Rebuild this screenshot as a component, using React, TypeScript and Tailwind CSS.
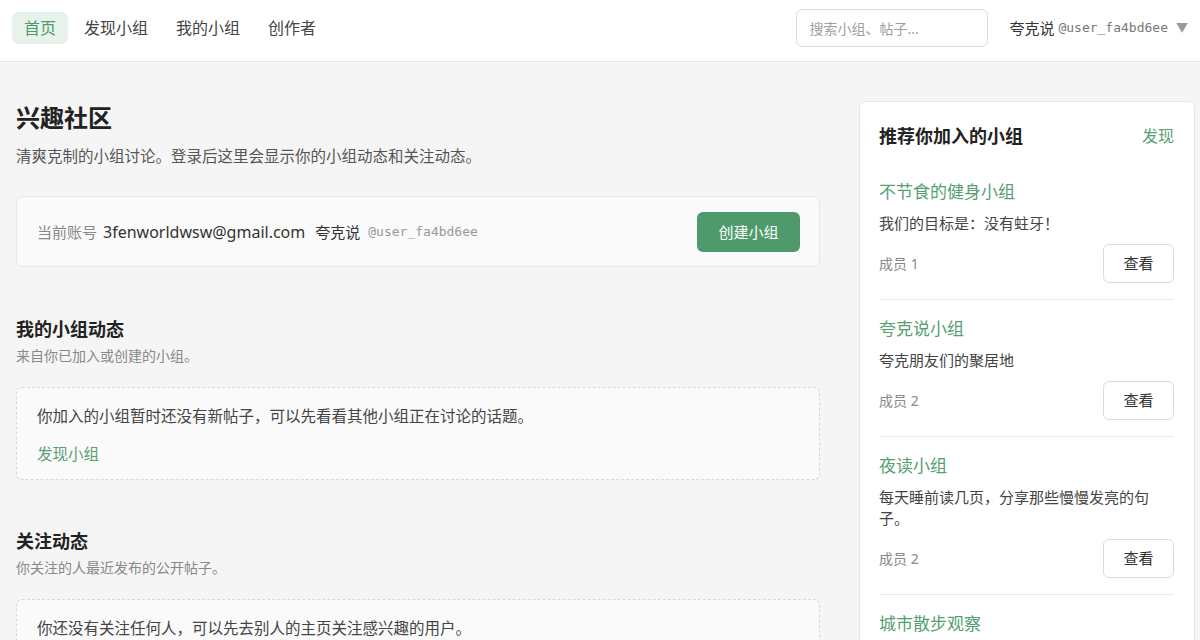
const groups = [
  { name: '不节食的健身小组', desc: '我们的目标是：没有蛀牙！', members: 1 },
  { name: '夸克说小组', desc: '夸克朋友们的聚居地', members: 2 },
  { name: '夜读小组', desc: '每天睡前读几页，分享那些慢慢发亮的句子。', members: 2 },
  { name: '城市散步观察', desc: '走路的时候，顺便看看这座城市。', members: 3 },
]

const navItems = ['首页', '发现小组', '我的小组', '创作者']

function Header() {
  return (
    <header className="flex items-center justify-between bg-white border-b border-[#e6e6e6] pl-3 pr-3 pt-[9px] pb-[14px]">
      <nav className="flex items-center gap-1">
        {navItems.map((item, i) => (
          <a
            key={item}
            className={
              i === 0
                ? 'px-3 h-8 flex items-center rounded-md bg-[#e7f2ea] text-[#4f9a6c] text-[16px]'
                : 'px-3 h-8 flex items-center rounded-md text-[#444] text-[16px]'
            }
          >
            {item}
          </a>
        ))}
      </nav>
      <div className="flex items-center gap-[21px]">
        <div className="w-[192px] h-[38px] border border-[#dcdcdc] rounded-md flex items-center pl-3 text-[14px] text-[#a0a0a0]">
          搜索小组、帖子...
        </div>
        <div className="flex items-center gap-1 text-[15px] text-[#333]">
          <span>夸克说</span>
          <span className="font-['DejaVu_Sans_Mono',monospace] text-[13px] text-[#777]">@user_fa4bd6ee</span>
          <span className="text-[12px] text-[#999] ml-1">▼</span>
        </div>
      </div>
    </header>
  )
}

function SectionHead({ title, sub }: { title: string; sub: string }) {
  return (
    <div>
      <h2 className="text-[18px] leading-[26px] font-bold text-[#222]">{title}</h2>
      <p className="mt-1 text-[14px] leading-5 text-[#888]">{sub}</p>
    </div>
  )
}

function EmptyBox({ text, link }: { text: string; link: string }) {
  return (
    <div className="mt-[21px] bg-[#fafafa] border border-dashed border-[#d8d8d8] rounded-md pl-5 pt-4 pb-[13px]">
      <p className="text-[15.5px] leading-6 text-[#444]">{text}</p>
      <a className="block mt-[14px] text-[15.5px] leading-6 text-[#5a9e74]">{link}</a>
    </div>
  )
}

function Sidebar() {
  return (
    <aside className="bg-white border border-[#e6e6e6] rounded-md pl-[19px] pr-5 pt-5 self-start">
      <div className="flex items-center justify-between mb-[13px]">
        <h3 className="text-[18px] leading-7 font-bold text-[#222]">推荐你加入的小组</h3>
        <a className="text-[16px] text-[#5a9e74]">发现</a>
      </div>
      {groups.map((g) => (
        <div key={g.name} className="pt-4 pb-[16px] border-b border-[#eaeaea]">
          <div className="text-[17px] leading-[26px] text-[#55a070]">{g.name}</div>
          <p className="mt-[8px] text-[15px] leading-[21px] text-[#444]">{g.desc}</p>
          <div className="mt-[10px] flex items-center justify-between">
            <span className="text-[14px] text-[#888]">成员 {g.members}</span>
            <button className="w-[71px] h-[39px] rounded-md border border-[#dcdcdc] bg-white text-[15px] text-[#333]">
              查看
            </button>
          </div>
        </div>
      ))}
    </aside>
  )
}

export default function App() {
  return (
    <div className="min-h-screen bg-[#f5f5f5] font-['Noto_Sans','Noto_Sans_CJK_SC',sans-serif] text-[#333]">
      <Header />
      <main className="grid grid-cols-[804px_336px] gap-[39px] pl-4 pt-[39px]">
        <div>
          {/* Intro */}
          <h1 className="text-[24px] leading-8 font-bold text-[#222] pt-[1px]">兴趣社区</h1>
          <p className="mt-[10px] text-[15.5px] leading-6 text-[#555]">
            清爽克制的小组讨论。登录后这里会显示你的小组动态和关注动态。
          </p>

          {/* Account */}
          <div className="mt-[28px] flex items-center justify-between bg-[#fafafa] border border-[#e8e8e8] rounded-md pl-5 pr-[19px] pt-[15px] pb-[14px]">
            <div className="flex items-center">
              <span className="text-[15px] text-[#888]">当前账号</span>
              <span className="ml-[6px] text-[16px] text-[#333]">3fenworldwsw@gmail.com</span>
              <span className="ml-[10px] text-[15px] text-[#333]">夸克说</span>
              <span className="ml-2 font-['DejaVu_Sans_Mono',monospace] text-[13px] text-[#999]">@user_fa4bd6ee</span>
            </div>
            <button className="w-[103px] h-10 rounded-md bg-[#4e9a6c] text-white text-[15px]">创建小组</button>
          </div>

          {/* My groups */}
          <div className="mt-[49px]">
            <SectionHead title="我的小组动态" sub="来自你已加入或创建的小组。" />
            <EmptyBox
              text="你加入的小组暂时还没有新帖子，可以先看看其他小组正在讨论的话题。"
              link="发现小组"
            />
          </div>

          {/* Following */}
          <div className="mt-[48px]">
            <SectionHead title="关注动态" sub="你关注的人最近发布的公开帖子。" />
            <EmptyBox
              text="你还没有关注任何人，可以先去别人的主页关注感兴趣的用户。"
              link="发现用户"
            />
          </div>
        </div>
        <Sidebar />
      </main>
    </div>
  )
}
